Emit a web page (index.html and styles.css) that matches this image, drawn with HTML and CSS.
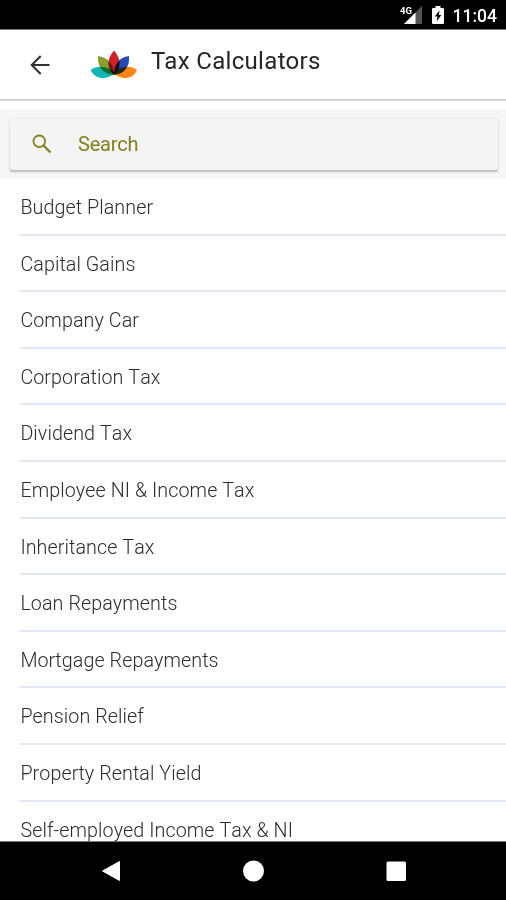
FILE: index.html
```html
<!DOCTYPE html>
<html lang="en">
<head>
<meta charset="utf-8">
<title>Tax Calculators</title>
<link rel="stylesheet" href="styles.css">
</head>
<body>
<div class="phone">
  <div class="status">
    <svg class="signal" width="24" height="20" viewBox="0 0 24 20">
      <path d="M22 1V19H4z" fill="#555"/>
      <path d="M15.500 7.500V19H4z" fill="#fff"/>
      <path d="M0 0H12.500V9.500H0z" fill="#000"/>
      <text x="0" y="8.500" class="network">4G</text>
    </svg>
    <svg class="battery" width="12" height="18" viewBox="0 0 12 18">
      <path d="M3.500 0h5v2H11q1 0 1 1v14q0 1-1 1H1q-1 0-1-1V3q0-1 1-1h2.500z" fill="#fff"/>
      <path d="M7.600 4.500L2.800 10.500H5.500L4.700 15.500L9.300 9H6.700z" fill="#000"/>
    </svg>
    <span class="clock">11:04</span>
  </div>
  <header class="appbar">
    <svg class="back" width="20" height="20" viewBox="0 0 20 20" fill="none" stroke="#303030" stroke-width="2">
      <path d="M19.500 10H2M10.700 1L1.700 10L10.700 19"/>
    </svg>
    <svg class="logo" width="48" height="30" viewBox="0 0 48 30">
      <path class="petal" fill="#10b5b7" d="M.5 20C8 14.500 18 16 25 23C17 30 6 30.500 .5 20z"/>
      <path class="petal" fill="#ff8518" d="M47 20C40 14.500 30 16 23 23C31 30 42 30.500 47 20z"/>
      <path class="petal" fill="#8c9d32" d="M8 6C18 7.500 24 14 24 25C13 24 7 17 8 6z"/>
      <path class="petal" fill="#244bb5" d="M39 6C29 7.500 24 14 24 25C34 24 40 17 39 6z"/>
      <path class="petal" fill="#d22128" d="M24 .5C31.500 9 31.500 18 24 25C16.500 18 16.500 9 24 .5z"/>
    </svg>
    <h1 class="title">Tax Calculators</h1>
  </header>
  <div class="searchbar">
    <div class="search">
      <svg width="20" height="20" viewBox="0 0 20 20" fill="none" stroke="#7b8420" stroke-width="1.800">
        <circle cx="7.300" cy="7.300" r="5.800"/><path d="M11.800 11.800L18.500 18.500" stroke-width="2.300"/>
      </svg>
      <span>Search</span>
    </div>
  </div>
  <ul class="list">
    <li>Budget Planner</li>
    <li>Capital Gains</li>
    <li>Company Car</li>
    <li>Corporation Tax</li>
    <li>Dividend Tax</li>
    <li>Employee NI &amp; Income Tax</li>
    <li>Inheritance Tax</li>
    <li>Loan Repayments</li>
    <li>Mortgage Repayments</li>
    <li>Pension Relief</li>
    <li>Property Rental Yield</li>
    <li>Self-employed Income Tax &amp; NI</li>
  </ul>
  <nav class="navbar">
    <svg width="20" height="22" viewBox="0 0 20 22"><path d="M1.500 11L18.500 1.500V20.500z" fill="#fff" stroke="#fff" stroke-linejoin="round"/></svg>
    <svg width="22" height="22" viewBox="0 0 22 22"><circle cx="10.500" cy="11" r="10.500" fill="#fff"/></svg>
    <svg width="20" height="22" viewBox="0 0 20 22"><rect x=".5" y="1.500" width="19.500" height="19.500" rx="1.500" fill="#fff"/></svg>
  </nav>
</div>
</body>
</html>
```

FILE: styles.css
```css
* { box-sizing: border-box; }
body { margin: 0; background: #fff; font-family: Roboto, "Liberation Sans", sans-serif; }
.phone { display: flex; flex-direction: column; width: 506px; height: 900px; overflow: hidden; }
.status { display: flex; flex: none; align-items: center; justify-content: flex-end; height: 30px; padding: 1px 9px 0 0; background: #000; border-bottom: 1px solid #777; color: #fff; }
.signal { margin: 0 8px 0 0; }
.network { font: bold 9.5px Roboto, sans-serif; fill: #fff; }
.battery { margin-right: 9px; }
.clock { font-size: 17.5px; font-weight: 500; line-height: 28px; padding-top: 2px; }
.appbar { display: flex; flex: none; align-items: center; height: 70px; padding-left: 30px; background: #fff; border-bottom: 1px solid #ccc; box-shadow: 0 1px 1px #ddd; }
.back { margin-right: 40px; }
.logo { margin-right: 13px; }
.petal { mix-blend-mode: multiply; }
.title { margin: 0 0 7px; font-size: 24px; font-weight: 400; line-height: 32px; letter-spacing: .32px; color: #262626; }
.searchbar { flex: none; height: 70px; margin-top: 9px; padding: 10px 8px 8px 10px; background: #f6f6f6; }
.search { display: flex; align-items: center; gap: 26px; height: 51px; padding: 0 0 1px 22px; border-radius: 2px; background: #f4f4f4; box-shadow: 0 2px 2px #bbb, 0 0 2px #ddd; color: #7b8420; font-size: 20px; letter-spacing: -.2px; }
.list { flex: 1; min-height: 0; overflow: hidden; margin: 0; padding: 0 0 0 20px; list-style: none; color: #2c2c2c; font-size: 19.7px; font-weight: 300; font-kerning: none; letter-spacing: .08px; }
.list li { height: 56.6px; padding-left: .4px; line-height: 57.6px; border-bottom: 2px solid #e4e6f2; }
.navbar { display: flex; flex: none; align-items: center; justify-content: space-between; height: 59px; padding: 0 100px 0 101px; background: #000; border-top: 1px solid #777; }
```
